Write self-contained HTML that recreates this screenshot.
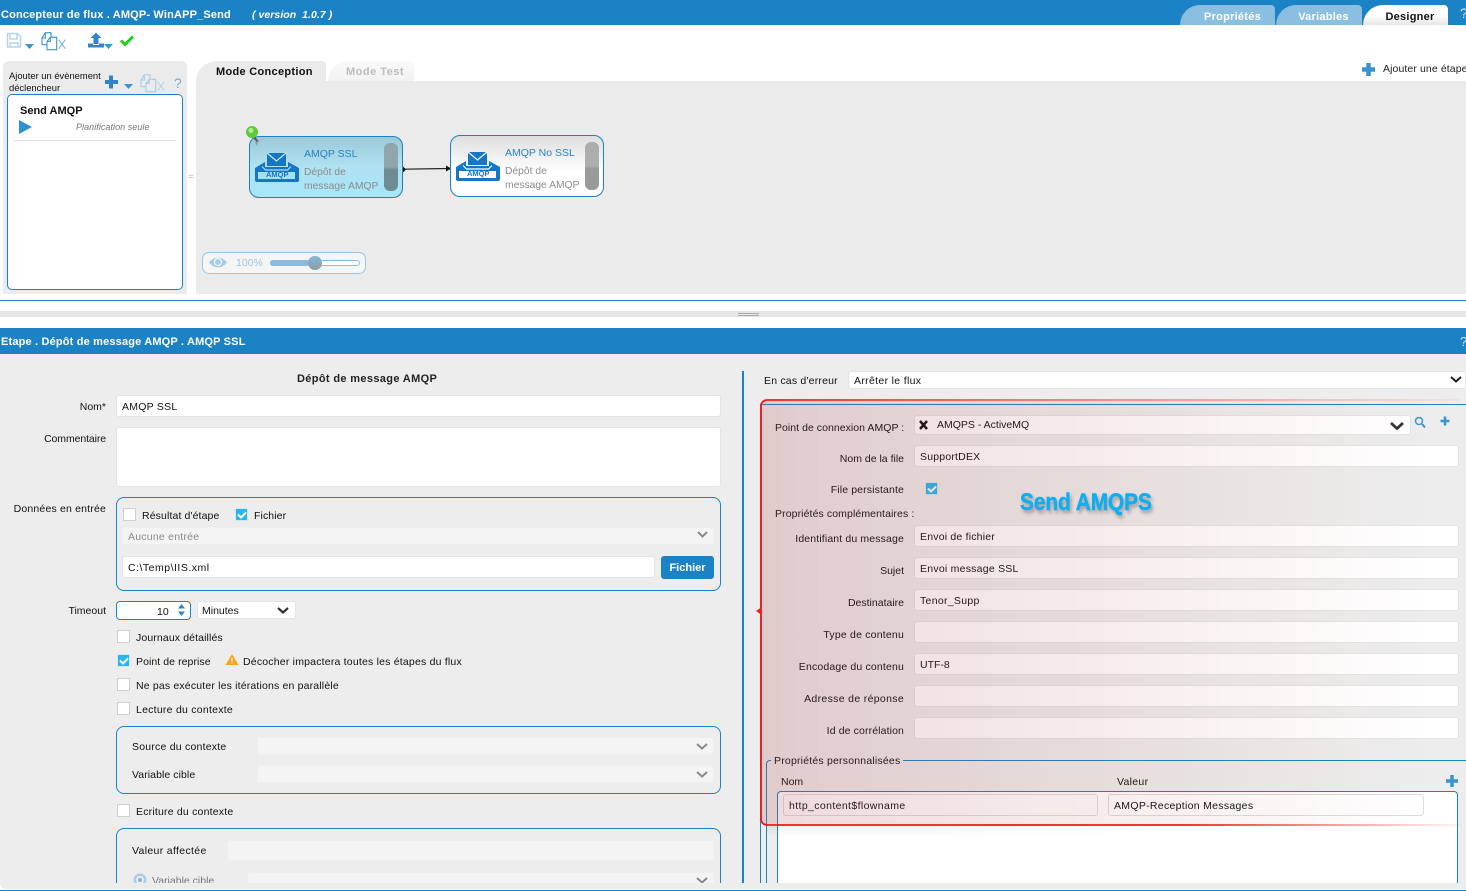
<!DOCTYPE html>
<html lang="fr"><head><meta charset="utf-8"><title>Concepteur de flux</title>
<style>
html,body{margin:0;padding:0}
body{width:1466px;height:891px;position:relative;overflow:hidden;background:#fff;font:10.5px "Liberation Sans",Arial,sans-serif;color:#111}
.a,.l,.r,.i,.cb,.box,.tab{position:absolute;box-sizing:border-box}
.l{white-space:nowrap;line-height:14px;margin-top:1px}
.r{white-space:nowrap;line-height:14px;text-align:right;margin-top:1px}
.i{background:#fff;border:1px solid #e4e4e4;border-radius:3px;line-height:18px;padding:1px 0 0 5px;white-space:nowrap;color:#111}
.d{background:#f4f4f4;border-color:#efefef;color:#8a8a8a}
.cb{width:13px;height:13px;background:#fff;border:1px solid #cfcfcf}
.ck{background:#29b6f0;border-color:#cfe8f5}
.box{border:1px solid #1c82c6;border-radius:8px}
.tab{top:5px;height:20px;background:#8bbfe2;color:#fff;font-weight:bold;font-size:11px;letter-spacing:.25px;border-radius:24px 5px 0 0;text-align:center;line-height:25px}
svg{position:absolute;overflow:visible}
</style></head><body>

<!-- Header -->
<div class="a" style="left:0;top:0;width:1466px;height:25px;background:#1c82c6"></div>
<div class="l" style="left:1px;top:7px;color:#fff;font-weight:bold;font-size:11px;letter-spacing:.16px">Concepteur de flux . AMQP- WinAPP_Send</div>
<div class="l" style="left:252px;top:7px;color:#fff;font-weight:bold;font-style:italic;font-size:10.5px;letter-spacing:.05px">( version&nbsp; 1.0.7 )</div>
<div class="tab" style="left:1180px;width:95px;padding-left:10px">Propriétés</div>
<div class="tab" style="left:1276px;width:86px;padding-left:9px">Variables</div>
<div class="tab" style="left:1363px;width:85px;background:linear-gradient(#fff 50%,#e6e6e6);color:#111;padding-left:9px">Designer</div>
<div class="l" style="left:1460px;top:5px;color:#cfe5f4;font-size:14px">?</div>

<!-- Toolbar icons -->
<svg style="left:0;top:25px" width="160" height="32" viewBox="0 0 160 32">
<path d="M7.500 8.500h10l3 3v10.500h-13z M10 9v5h7v-5 M10 22v-4h8v4" fill="none" stroke="#b6d5ea" stroke-width="1.500"/>
<path d="M25 19h9l-4.500 5z" fill="#3f93cd"/>
<path d="M47 19.700H42V13l3.300-5.300H51V12.300 M45.300 7.700V13H42" fill="none" stroke="#3f93cd" stroke-width="1.100"/>
<path d="M47 16.300l3.300-4H56.700V24.700H47z M50.300 12.300V16.300H47" fill="none" stroke="#3f93cd" stroke-width="1.100"/>
<path d="M58.700 14.700l6.600 9m0-9l-6.600 9" stroke="#7db6dc" stroke-width="1.200"/>
<path d="M88 18.500h5v1.500h6v-1.500h5v4H88z" fill="#2f86c6"/><path d="M96 7.500l5.500 5.500H98.500v6h-5v-6H90.500z" fill="#2f86c6"/>
<path d="M104 19h9l-4.500 5z" fill="#3f93cd"/>
<path d="M121 15.500l4 4 8-8" fill="none" stroke="#1fd21f" stroke-width="3"/>
</svg>

<!-- Left trigger panel -->
<div class="a" style="left:3px;top:61px;width:184px;height:233px;background:#ebebeb;border-radius:6px 6px 0 0"></div>
<div class="l" style="left:9px;top:69px;font-size:9.4px;line-height:12px;white-space:normal;width:96px">Ajouter un évènement déclencheur</div>
<svg style="left:101px;top:70px" width="90" height="24" viewBox="0 0 90 24">
<path d="M10 5.500v13M4 12h13" stroke="#2f86c6" stroke-width="4"/>
<path d="M23 14h9l-4.500 5z" fill="#3f93cd"/>
<g transform="translate(-2,-3)">
<path d="M47 19.700H42V13l3.300-5.300H51V12.300 M45.300 7.700V13H42" fill="none" stroke="#a9cce4" stroke-width="1.100"/>
<path d="M47 16.300l3.300-4H56.700V24.700H47z M50.300 12.300V16.300H47" fill="none" stroke="#a9cce4" stroke-width="1.100"/>
<path d="M58.700 14.700l6.600 9m0-9l-6.600 9" stroke="#b6d5ea" stroke-width="1.200"/>
</g>
</svg>
<div class="l" style="left:174px;top:75px;font-size:14px;color:#6fa9d3">?</div>
<div class="a" style="left:7px;top:94px;width:176px;height:196px;background:#fff;border:1px solid #1c82c6;border-radius:5px"></div>
<div class="l" style="left:20px;top:103px;font-size:11px;font-weight:bold;color:#111">Send AMQP</div>
<svg style="left:19px;top:120px" width="14" height="14"><path d="M0 0l13 7L0 14z" fill="#2f8fd0"/></svg>
<div class="l" style="left:76px;top:119px;font-size:9px;font-style:italic;color:#777;letter-spacing:.05px">Planification seule</div>
<div class="a" style="left:14px;top:140px;width:162px;height:1px;background:#ddd"></div>
<div class="l" style="left:188px;top:170px;color:#bbb;font-size:10px">=</div>

<!-- Canvas -->
<div class="a" style="left:196px;top:81px;width:1270px;height:213px;background:#ebebeb"></div>
<div class="a" style="left:196px;top:61px;width:130px;height:21px;background:#ebebeb;border-radius:24px 5px 0 0"></div>
<div class="l" style="left:216px;top:64px;font-size:11px;font-weight:bold;letter-spacing:.3px;color:#111">Mode Conception</div>
<div class="a" style="left:328px;top:61px;width:86px;height:20px;background:linear-gradient(#fafafa,#f2f2f2);border-radius:20px 4px 0 0"></div>
<div class="l" style="left:346px;top:64px;font-size:11px;font-weight:bold;letter-spacing:.5px;color:#bdbdbd">Mode Test</div>
<svg style="left:1361px;top:62px" width="15" height="15"><path d="M7.500 1v13M1 7.500h13" stroke="#3a93cf" stroke-width="4.500"/></svg>
<div class="l" style="left:1383px;top:61px;font-size:10.5px;letter-spacing:.1px;color:#222">Ajouter une étape</div>

<!-- Node 1 -->
<div class="a" style="left:249px;top:136px;width:154px;height:62px;border:1px solid #1c82c6;border-radius:10px;background:linear-gradient(#9bc8d8,#b0e2f2 50%,#a6e6fb)"></div>
<svg style="left:255px;top:152px" width="44" height="30" viewBox="0 0 44 30">
<path d="M12 1h19v13H12z" fill="#1476c4"/><path d="M12 1l9.500 8L31 1" fill="none" stroke="#c9ecf8" stroke-width="1.200"/>
<path d="M0 16l10-6v5h23v-5l11 6v12a2 2 0 0 1-2 2H2a2 2 0 0 1-2-2z" fill="#1476c4"/>
<path d="M7 14.500l3.500 3.500h22l3.500-3.500" fill="none" stroke="#a6e0f4" stroke-width="1.200"/>
<path d="M3 20h37v7H3z" fill="#a6e0f4"/>
</svg>
<div class="l" style="left:266px;top:167px;font-size:7.500px;font-weight:bold;color:#1476c4">AMQP</div>
<div class="l" style="left:304px;top:146px;font-size:10.500px;color:#2a85c4">AMQP SSL</div>
<div class="l" style="left:304px;top:165px;font-size:10.300px;line-height:13.500px;color:#8c8c8c">Dépôt de<br>message AMQP</div>
<div class="a" style="left:384px;top:143px;width:14px;height:48px;border-radius:6px;background:linear-gradient(#8fa6ac 50%,#6f8b94 56%)"></div>
<svg style="left:244px;top:124px" width="20" height="26"><path d="M9 12l5 6" stroke="#555" stroke-width="2"/><path d="M11 18l3-1-1 5z" fill="#8a9ba5"/><circle cx="8" cy="8" r="6" fill="#5fc83c"/><circle cx="7" cy="6.500" r="2.500" fill="#a9ee8f"/></svg>
<!-- Connector -->
<svg style="left:400px;top:160px" width="54" height="16"><path d="M4 9.200L48 8.500" stroke="#222" stroke-width="1.200"/><path d="M3 6.500v6l3-3z" fill="#111"/><path d="M46 5.500l5 3-5 3z" fill="#111"/></svg>
<!-- Node 2 -->
<div class="a" style="left:450px;top:135px;width:154px;height:62px;border:1px solid #1c82c6;border-radius:10px;background:linear-gradient(#dedede,#fff 60%)"></div>
<svg style="left:456px;top:151px" width="44" height="30" viewBox="0 0 44 30">
<path d="M12 1h19v13H12z" fill="#1476c4"/><path d="M12 1l9.500 8L31 1" fill="none" stroke="#fff" stroke-width="1.200"/>
<path d="M0 16l10-6v5h23v-5l11 6v12a2 2 0 0 1-2 2H2a2 2 0 0 1-2-2z" fill="#1476c4"/>
<path d="M7 14.500l3.500 3.500h22l3.500-3.500" fill="none" stroke="#fff" stroke-width="1.200"/>
<path d="M3 20h37v7H3z" fill="#fff"/>
</svg>
<div class="l" style="left:467px;top:166px;font-size:7.500px;font-weight:bold;color:#1476c4">AMQP</div>
<div class="l" style="left:505px;top:145px;font-size:10.500px;color:#2a85c4">AMQP No SSL</div>
<div class="l" style="left:505px;top:164px;font-size:10.300px;line-height:13.500px;color:#8c8c8c">Dépôt de<br>message AMQP</div>
<div class="a" style="left:585px;top:142px;width:14px;height:48px;border-radius:6px;background:linear-gradient(#adadad 50%,#999 56%)"></div>

<!-- Zoom slider -->
<div class="a" style="left:202px;top:252px;width:164px;height:22px;background:#f5f5f5;border:1px solid #9cc7e4;border-radius:7px"></div>
<svg style="left:209px;top:256px" width="20" height="13" viewBox="0 0 20 13"><path d="M0 6.500C5 0 13 0 18 6.500 13 13 5 13 0 6.500z" fill="#a5cde8"/><circle cx="9" cy="6" r="4" fill="#fff"/><circle cx="9" cy="6" r="3" fill="#a5cde8"/></svg>
<div class="l" style="left:236px;top:255px;font-size:10.500px;color:#9cc5e2">100%</div>
<div class="a" style="left:270px;top:260px;width:90px;height:6px;border:1px solid #8dbbdb;border-radius:3px;background:#fff"></div>
<div class="a" style="left:270px;top:260px;width:46px;height:6px;border-radius:3px;background:#8dbbdb"></div>
<div class="a" style="left:308px;top:256px;width:14px;height:14px;border-radius:50%;background:linear-gradient(#82b6d8,#8f9ca5)"></div>

<!-- Separators -->
<div class="a" style="left:0;top:300px;width:1466px;height:1px;background:#1c82c6"></div>
<div class="a" style="left:0;top:311px;width:1466px;height:6px;background:#e6e6e6"></div>
<div class="a" style="left:738px;top:313px;width:21px;height:3px;border-top:1px solid #aaa;border-bottom:1px solid #aaa"></div>

<!-- Step header -->
<div class="a" style="left:0;top:328px;width:1466px;height:26px;background:#1c82c6"></div>
<div class="l" style="left:1px;top:334px;color:#fff;font-weight:bold;font-size:11px;letter-spacing:.17px">Etape . Dépôt de message AMQP . AMQP SSL</div>
<div class="l" style="left:1460px;top:334px;color:#cfe5f4;font-size:13px">?</div>

<!-- Form bg -->
<div class="a" style="left:0;top:354px;width:1466px;height:535px;background:#ededed;border-radius:0 0 0 6px"></div>
<div class="a" style="left:0;top:890px;width:1466px;height:1px;background:#1c82c6"></div>

<!-- Left form -->
<div class="a" style="left:0;top:354px;width:740px;height:529px;overflow:hidden">
<div class="l" style="left:297px;top:17px;font-weight:bold;font-size:11px;letter-spacing:.35px;color:#222">Dépôt de message AMQP</div>
<div class="r" style="left:0;width:106px;top:45px">Nom*</div>
<div class="i" style="left:116px;top:41px;width:605px;height:22px;line-height:21px;letter-spacing:.25px">AMQP SSL</div>
<div class="r" style="left:0;width:106px;top:77px;letter-spacing:-.1px">Commentaire</div>
<div class="i" style="left:116px;top:73px;width:605px;height:60px"></div>
<div class="r" style="left:0;width:106px;top:147px;letter-spacing:.18px">Données en entrée</div>
<div class="box" style="left:116px;top:143px;width:605px;height:94px"></div>
<div class="cb" style="left:123px;top:154px"></div>
<div class="l" style="left:142px;top:154px;letter-spacing:.12px">Résultat d'étape</div>
<div class="cb ck" style="left:235px;top:154px"></div>
<div class="l" style="left:254px;top:154px;letter-spacing:.1px">Fichier</div>
<div class="i d" style="left:122px;top:173px;width:592px;height:18px;line-height:17px;border-radius:2px;letter-spacing:.23px">Aucune entrée</div>
<div class="i" style="left:122px;top:202px;width:533px;height:22px;line-height:21px;letter-spacing:.5px">C:\Temp\IIS.xml</div>
<div class="a" style="left:661px;top:202px;width:53px;height:23px;background:#1c82c6;border-radius:3px;color:#fff;font-weight:bold;font-size:11px;text-align:center;line-height:24px">Fichier</div>
<div class="r" style="left:0;width:106px;top:249px">Timeout</div>
<div class="box" style="left:116px;top:247px;width:75px;height:19px;border-radius:4px;background:#fff"></div>
<div class="l" style="left:157px;top:250px">10</div>
<div class="i" style="left:197px;top:247px;width:99px;height:18px;line-height:17px;padding-left:4px">Minutes</div>
<div class="cb" style="left:117px;top:276px"></div><div class="l" style="left:136px;top:276px;letter-spacing:.12px">Journaux détaillés</div>
<div class="cb ck" style="left:117px;top:300px"></div><div class="l" style="left:136px;top:300px;letter-spacing:.07px">Point de reprise</div>
<div class="l" style="left:243px;top:300px;letter-spacing:.2px">Décocher impactera toutes les étapes du flux</div>
<div class="cb" style="left:117px;top:324px"></div><div class="l" style="left:136px;top:324px;letter-spacing:.17px">Ne pas exécuter les itérations en parallèle</div>
<div class="cb" style="left:117px;top:348px"></div><div class="l" style="left:136px;top:348px;letter-spacing:.25px">Lecture du contexte</div>
<div class="box" style="left:116px;top:372px;width:605px;height:68px"></div>
<div class="l" style="left:132px;top:385px;letter-spacing:.22px">Source du contexte</div>
<div class="i d" style="left:257px;top:383px;width:457px;height:18px"></div>
<div class="l" style="left:132px;top:413px;letter-spacing:.07px">Variable cible</div>
<div class="i d" style="left:257px;top:411px;width:457px;height:18px"></div>
<div class="cb" style="left:117px;top:450px"></div><div class="l" style="left:136px;top:450px;letter-spacing:.2px">Ecriture du contexte</div>
<div class="box" style="left:116px;top:474px;width:605px;height:90px"></div>
<div class="l" style="left:132px;top:489px;letter-spacing:.33px">Valeur affectée</div>
<div class="i d" style="left:227px;top:486px;width:487px;height:21px"></div>
<svg style="left:133px;top:519px" width="14" height="14"><circle cx="7" cy="7" r="6.500" fill="#a9cfe8"/><circle cx="7" cy="7" r="4" fill="#eee"/><circle cx="7" cy="7" r="2" fill="#7fb5da"/></svg>
<div class="l" style="left:152px;top:519px;color:#777">Variable cible</div>
<div class="i d" style="left:247px;top:518px;width:467px;height:20px"></div>
<svg style="left:0;top:0" width="740" height="529">
<g fill="none" stroke="#8a8a8a" stroke-width="2"><path d="M698 178l4.500 4.500 4.500-4.500M697 390l5 4.500 5-4.500M697 418l5 4.500 5-4.500M697 524l5 4.500 5-4.500"/></g>
<path d="M278 254l5 4.500 5-4.500" fill="none" stroke="#333" stroke-width="2.200"/>
<path d="M181.500 250l-3.500 4.500h7zM181.500 262l-3.500-4.500h7z" fill="#2f86c6"/>
<path d="M232 300l6.500 11h-13z" fill="#f5a623"/><path d="M232 304v3.500M232 308.500v1" stroke="#fff"/>
<g fill="none" stroke="#fff" stroke-width="2"><path d="M238 160.500l3 3 5-5M120 306.500l3 3 5-5"/></g>
</svg>
</div>

<!-- Divider -->
<div class="a" style="left:742px;top:371px;width:2px;height:512px;background:#1c82c6"></div>

<!-- Right form -->
<div class="a" style="left:744px;top:354px;width:722px;height:529px;overflow:hidden">
<div class="l" style="left:20px;top:19px;letter-spacing:.2px">En cas d'erreur</div>
<div class="i" style="left:104px;top:17px;width:618px;height:18px;line-height:17px;letter-spacing:.33px">Arrêter le flux</div>
<div class="a" style="left:16px;top:50px;width:706px;height:1px;background:#1c82c6"></div>
<div class="a" style="left:16px;top:50px;width:1px;height:479px;background:#1c82c6"></div>
<div class="l" style="left:31px;top:66px;letter-spacing:.04px">Point de connexion AMQP :</div>
<div class="i" style="left:170px;top:61px;width:497px;height:20px;padding-left:22px;line-height:16px">AMQPS - ActiveMQ</div>
<div class="r" style="left:0;width:160px;top:97px">Nom de la file</div>
<div class="i" style="left:170px;top:91px;width:545px;height:22px;line-height:21px;letter-spacing:.2px">SupportDEX</div>
<div class="r" style="left:0;width:160px;top:128px;letter-spacing:.13px">File persistante</div>
<div class="cb ck" style="left:181px;top:128px;width:13px;height:13px"></div>
<div class="l" style="left:31px;top:152px;letter-spacing:.1px">Propriétés complémentaires :</div>
<div class="r" style="left:0;width:160px;top:177px;letter-spacing:.14px">Identifiant du message</div>
<div class="i" style="left:170px;top:171px;width:545px;height:22px;line-height:21px;letter-spacing:.2px">Envoi de fichier</div>
<div class="r" style="left:0;width:160px;top:209px">Sujet</div>
<div class="i" style="left:170px;top:203px;width:545px;height:22px;line-height:21px;letter-spacing:.24px">Envoi message SSL</div>
<div class="r" style="left:0;width:160px;top:241px">Destinataire</div>
<div class="i" style="left:170px;top:235px;width:545px;height:22px;line-height:21px;letter-spacing:.3px">Tenor_Supp</div>
<div class="r" style="left:0;width:160px;top:273px;letter-spacing:.2px">Type de contenu</div>
<div class="i" style="left:170px;top:267px;width:545px;height:22px"></div>
<div class="r" style="left:0;width:160px;top:305px;letter-spacing:.16px">Encodage du contenu</div>
<div class="i" style="left:170px;top:299px;width:545px;height:22px;line-height:21px">UTF-8</div>
<div class="r" style="left:0;width:160px;top:337px;letter-spacing:.33px">Adresse de réponse</div>
<div class="i" style="left:170px;top:331px;width:545px;height:22px"></div>
<div class="r" style="left:0;width:160px;top:369px;letter-spacing:.12px">Id de corrélation</div>
<div class="i" style="left:170px;top:363px;width:545px;height:22px"></div>
<div class="a" style="left:22px;top:406px;width:700px;height:123px;border:1px solid #1c82c6;border-bottom:0;border-right:0;border-radius:4px 0 0 0"></div>
<div class="l" style="left:27px;top:399px;background:#ededed;padding:0 3px;letter-spacing:.2px">Propriétés personnalisées</div>
<div class="l" style="left:37px;top:420px">Nom</div>
<div class="l" style="left:373px;top:420px;letter-spacing:.3px">Valeur</div>
<div class="a" style="left:33px;top:437px;width:681px;height:92px;background:#fff;border:1px solid #1c82c6;border-bottom:0;border-radius:4px 4px 0 0"></div>
<div class="i" style="left:39px;top:440px;width:315px;height:22px;line-height:21px;border-color:#ddd;letter-spacing:.38px">http_content$flowname</div>
<div class="i" style="left:364px;top:440px;width:316px;height:22px;line-height:21px;border-color:#ddd;letter-spacing:.3px">AMQP-Reception Messages</div>
<svg style="left:0;top:0" width="722" height="529">
<path d="M707 23l5 4.500 5-4.500" fill="none" stroke="#222" stroke-width="2"/>
<path d="M647 69l6 5.500 6-5.500" fill="none" stroke="#333" stroke-width="2.800"/>
<path d="M176 67l7 8m0-8l-7 8" stroke="#111" stroke-width="2.500"/>
<circle cx="675" cy="67" r="3.500" fill="none" stroke="#3a93cf" stroke-width="1.500"/><path d="M678 70l3 3.500" stroke="#3a93cf" stroke-width="2"/>
<path d="M701 62.500v9M696.500 67h9" stroke="#3a93cf" stroke-width="2.500"/>
<path d="M708 421v12M702 427h12" stroke="#3a93cf" stroke-width="3.500"/>
<path d="M184 134.500l3 3 5-5" fill="none" stroke="#fff" stroke-width="2"/>
</svg>
</div>

<!-- Red highlight overlay -->
<div class="a" style="left:761px;top:401px;width:705px;height:424px;background:linear-gradient(90deg,rgba(170,60,60,.19),rgba(170,60,60,.09) 50%,rgba(170,60,60,0) 95%);border-radius:6px 0 0 6px"></div>
<div class="a" style="left:766px;top:825px;width:400px;height:12px;background:linear-gradient(rgba(0,0,0,.05),rgba(0,0,0,0));-webkit-mask-image:linear-gradient(90deg,#000 40%,transparent);mask-image:linear-gradient(90deg,#000 40%,transparent)"></div>
<svg style="left:0;top:0" width="1466" height="891">
<defs>
<linearGradient id="t" gradientUnits="userSpaceOnUse" x1="761" y1="0" x2="1460" y2="0"><stop offset="0" stop-color="#f01818"/><stop offset=".5" stop-color="#f01818" stop-opacity=".5"/><stop offset="1" stop-color="#f01818" stop-opacity=".05"/></linearGradient>
<linearGradient id="b" gradientUnits="userSpaceOnUse" x1="761" y1="0" x2="1460" y2="0"><stop offset="0" stop-color="#f01818"/><stop offset=".6" stop-color="#f01818"/><stop offset="1" stop-color="#f01818" stop-opacity=".05"/></linearGradient>
</defs>
<path d="M767 400H1460" fill="none" stroke="url(#t)" stroke-width="1.800"/>
<path d="M767 825H1460" fill="none" stroke="url(#b)" stroke-width="1.800"/>
<path d="M767 400a6 6 0 0 0-6 6V819a6 6 0 0 0 6 6" fill="none" stroke="#f01818" stroke-width="1.800"/>
<path d="M756 611l5-3.500v7z" fill="#f01818"/>
</svg>
<div class="l" style="left:1020px;top:488px;font-size:24px;line-height:28px;font-weight:bold;color:#10aef0;-webkit-text-stroke:.5px #10aef0;text-shadow:2px 3px 4px rgba(0,0,0,.35);transform:scaleX(.865);transform-origin:0 0">Send AMQPS</div>

</body></html>
